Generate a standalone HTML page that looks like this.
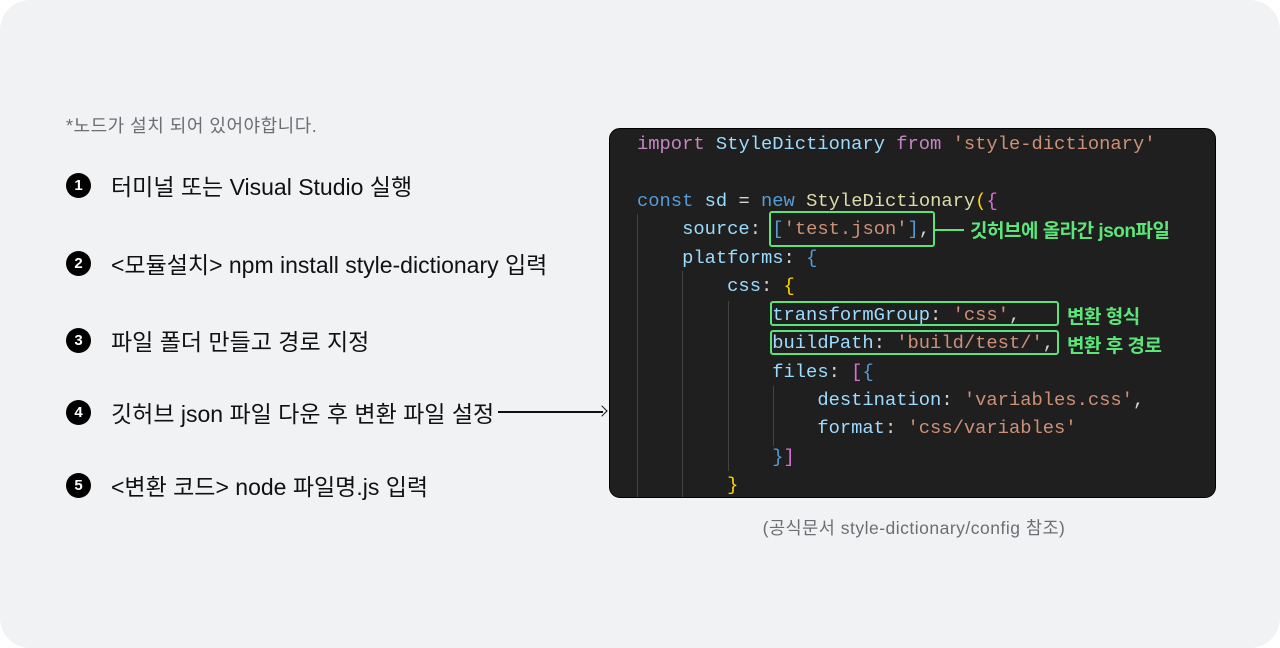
<!DOCTYPE html>
<html><head><meta charset="utf-8"><style>
*{margin:0;padding:0;box-sizing:border-box}
body{width:1280px;height:648px;background:#fff;overflow:hidden;font-family:"Liberation Sans","Noto Sans CJK KR",sans-serif}
.card{position:absolute;left:0;top:0;width:1280px;height:648px;background:#f1f2f4;border-radius:30px}
.note{position:absolute;left:66px;top:112px;font-size:18px;color:#6b6e73;letter-spacing:0.5px}
.item{position:absolute;left:66px;height:26px;display:flex;align-items:center;font-size:23px;color:#111;letter-spacing:0}
.num{width:25px;height:25px;border-radius:50%;background:#000;color:#fff;font-size:15px;font-weight:bold;display:flex;align-items:center;justify-content:center;margin-right:20px;letter-spacing:0}
.arrow{position:absolute;left:498px;top:411px;width:105px;height:1.5px;background:#111}
.arrowhead{position:absolute;left:598px;top:407px;width:8px;height:8px;border-top:1.5px solid #111;border-right:1.5px solid #111;transform:rotate(45deg)}
.code{position:absolute;left:609px;top:128px;width:607px;height:370px;background:#1f1f1f;border-radius:11px;border:1px solid #000;overflow:hidden}
.ln{position:absolute;left:27px;white-space:pre;font-family:"Liberation Mono",monospace;font-size:18.8px;color:#9cdcfe;line-height:28px}
.g{position:absolute;width:1px;background:#444}
.k{color:#c586c0}.c{color:#9cdcfe}.b{color:#569cd6}.s{color:#ce9178}.w{color:#d4d4d4}.y{color:#ffd700}.p{color:#da70d6}.f{color:#dcdcaa}
.box{position:absolute;border:2.5px solid #5be37a;border-radius:3px}
.ann{position:absolute;color:#5ce67a;font-weight:bold;font-size:19px;letter-spacing:-0.5px}
.cap{position:absolute;left:714px;width:400px;text-align:center;top:515px;font-size:17.5px;color:#6b6e73;letter-spacing:0.5px}
</style></head><body>
<div class="card"></div>
<div class="note">*노드가 설치 되어 있어야합니다.</div>
<div class="item" style="top:172px"><div class="num">1</div>터미널 또는 Visual Studio 실행</div>
<div class="item" style="top:250px"><div class="num">2</div>&lt;모듈설치&gt; npm install style-dictionary 입력</div>
<div class="item" style="top:327px"><div class="num">3</div>파일 폴더 만들고 경로 지정</div>
<div class="item" style="top:399px"><div class="num">4</div>깃허브 json 파일 다운 후 변환 파일 설정</div>
<div class="item" style="top:472px"><div class="num">5</div>&lt;변환 코드&gt; node 파일명.js 입력</div>
<div class="arrow"></div><div class="arrowhead"></div>
<div class="code">
<div class="g" style="left:27px;top:85px;height:290px"></div>
<div class="g" style="left:72px;top:142px;height:230px"></div>
<div class="g" style="left:118px;top:172px;height:170px"></div>
<div class="g" style="left:163px;top:257px;height:60px"></div>
<div class="ln" style="top:1px"><span class="k">import</span> <span class="c">StyleDictionary</span> <span class="k">from</span> <span class="s">'style-dictionary'</span></div>
<div class="ln" style="top:58px"><span class="b">const</span> sd <span class="w">=</span> <span class="b">new</span> <span class="f">StyleDictionary</span><span class="y">(</span><span class="p">{</span></div>
<div class="ln" style="top:86px">    source<span class="w">:</span> <span class="b">[</span><span class="s">'test.json'</span><span class="b">]</span><span class="w">,</span></div>
<div class="ln" style="top:115px">    platforms<span class="w">:</span> <span class="b">{</span></div>
<div class="ln" style="top:143px">        css<span class="w">:</span> <span class="y">{</span></div>
<div class="ln" style="top:172px">            transformGroup<span class="w">:</span> <span class="s">'css'</span><span class="w">,</span></div>
<div class="ln" style="top:200px">            buildPath<span class="w">:</span> <span class="s">'build/test/'</span><span class="w">,</span></div>
<div class="ln" style="top:229px">            files<span class="w">:</span> <span class="p">[</span><span class="b">{</span></div>
<div class="ln" style="top:257px">                destination<span class="w">:</span> <span class="s">'variables.css'</span><span class="w">,</span></div>
<div class="ln" style="top:285px">                format<span class="w">:</span> <span class="s">'css/variables'</span></div>
<div class="ln" style="top:314px">            <span class="b">}</span><span class="p">]</span></div>
<div class="ln" style="top:342px">        <span class="y">}</span></div>
<div class="box" style="left:159px;top:82px;width:166px;height:36px"></div>
<div class="box" style="left:160px;top:172px;width:289px;height:25px"></div>
<div class="box" style="left:160px;top:201px;width:289px;height:25px"></div>
<div style="position:absolute;left:324px;top:100px;width:30px;height:2px;background:#5be37a"></div>
<div class="ann" style="left:360px;top:87px">깃허브에 올라간 json파일</div>
<div class="ann" style="left:457px;top:173px">변환 형식</div>
<div class="ann" style="left:457px;top:202px">변환 후 경로</div>
</div>
<div class="cap">(공식문서 style-dictionary/config 참조)</div>
</body></html>
